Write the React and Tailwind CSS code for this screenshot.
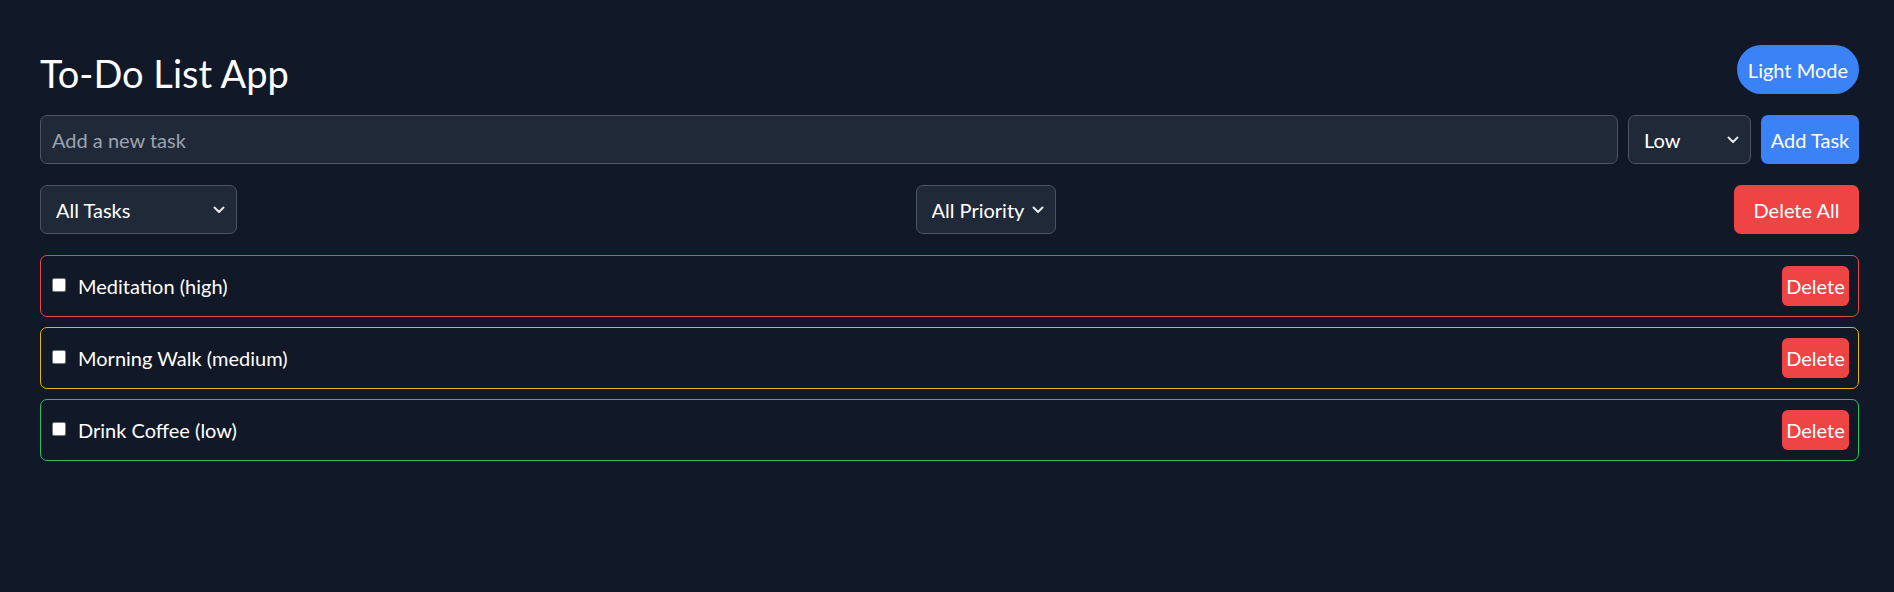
import React, { useState } from "react";

const TASKS = [
  { id: 1, text: "Meditation", priority: "high" },
  { id: 2, text: "Morning Walk", priority: "medium" },
  { id: 3, text: "Drink Coffee", priority: "low" },
];

const borderByPriority = {
  high: "border-[#ef4444]",
  medium: "border-[#eab308]",
  low: "border-[#22c55e]",
};

const Chevron = () => (
  <svg
    className="pointer-events-none absolute right-[12px] top-1/2 -translate-y-1/2"
    width="12"
    height="8"
    viewBox="0 0 12 8"
    fill="none"
  >
    <path d="M1.5 1.5 6 6l4.5-4.5" stroke="#e5e7eb" strokeWidth="2" strokeLinecap="round" strokeLinejoin="round" />
  </svg>
);

const Select = ({ value, options, className }) => (
  <div className={`relative ${className}`}>
    <select
      defaultValue={value}
      className="appearance-none w-full h-full bg-[#1f2937] border border-[#4b5563] rounded-[7px] pl-[15px] pr-[30px] text-white text-[20px] outline-none"
    >
      {options.map((o) => (
        <option key={o}>{o}</option>
      ))}
    </select>
    <Chevron />
  </div>
);

export default function App() {
  const [tasks, setTasks] = useState(TASKS);

  return (
    <div
      className="min-h-[592px] bg-[#111827] text-white pl-10 pr-[35px] pt-[45px]"
      style={{ fontFamily: '"Segoe UI", Lato, "Open Sans", sans-serif' }}
    >
      <div className="flex items-center justify-between h-[49px]">
        <h1 className="text-[38px] leading-none mt-[6px]">To-Do List App</h1>
        <button className="h-[49px] px-[11px] rounded-full bg-[#3b82f6] text-white text-[20px]">
          Light Mode
        </button>
      </div>

      <div className="flex gap-[10px] mt-[21px] h-[49px]">
        <input
          placeholder="Add a new task"
          className="flex-1 bg-[#1f2937] border border-[#4b5563] rounded-[7px] px-[11px] text-[20px] text-white placeholder:text-[#9ca3af] outline-none"
        />
        <Select value="Low" options={["Low", "Medium", "High"]} className="w-[123px]" />
        <button className="w-[98px] rounded-[7px] bg-[#3b82f6] text-white text-[20px]">
          Add Task
        </button>
      </div>

      <div className="flex justify-between items-center mt-[21px] h-[49px]">
        <Select value="All Tasks" options={["All Tasks", "Completed", "Pending"]} className="w-[197px] h-[49px]" />
        <Select value="All Priority" options={["All Priority", "High", "Medium", "Low"]} className="w-[140px] h-[49px]" />
        <button className="w-[125px] h-[49px] rounded-[7px] bg-[#ef4444] text-white text-[20px]">
          Delete All
        </button>
      </div>

      <div className="flex flex-col gap-[10px] mt-[21px]">
        {tasks.map((t) => (
          <div
            key={t.id}
            className={`flex items-center justify-between h-[62px] border rounded-[7px] pl-[11px] pr-[9px] ${borderByPriority[t.priority]}`}
          >
            <label className="flex items-center gap-[12px] text-[20px]">
              <input
                type="checkbox"
                className="appearance-none w-[14px] h-[14px] bg-white border border-[#767676] rounded-[2px] -mt-[2px]"
              />
              <span>
                {t.text} ({t.priority})
              </span>
            </label>
            <button
              onClick={() => setTasks(tasks.filter((x) => x.id !== t.id))}
              className="h-[40px] w-[67px] rounded-[6px] bg-[#ef4444] text-white text-[20px]"
            >
              Delete
            </button>
          </div>
        ))}
      </div>
    </div>
  );
}
